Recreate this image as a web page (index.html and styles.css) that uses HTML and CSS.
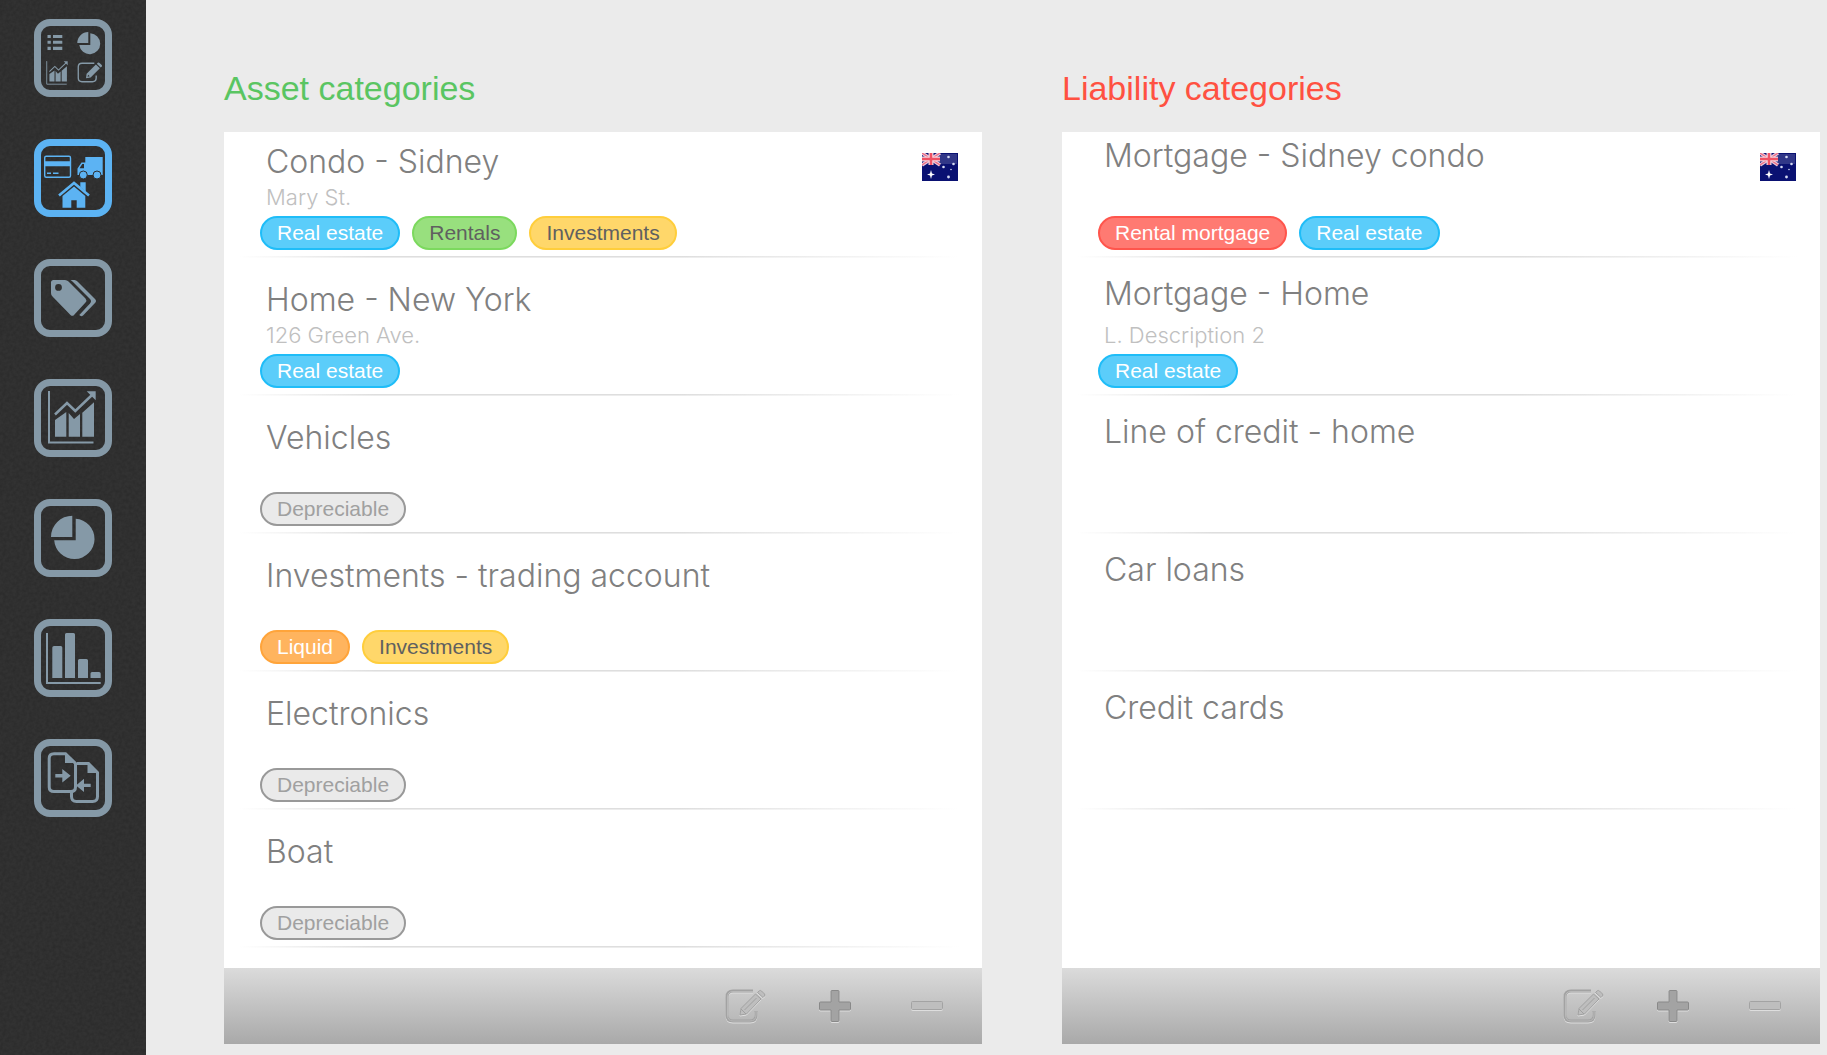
FILE: index.html
```html
<!DOCTYPE html>
<html lang="en">
<head>
<meta charset="utf-8">
<title>Categories</title>
<link rel="stylesheet" href="styles.css">
</head>
<body>
<svg class="defs" width="0" height="0" aria-hidden="true">
  <symbol id="trend" viewBox="0 0 78 78">
    <path d="M15 12V63.500H59.500" fill="none" stroke="currentColor" stroke-width="2"/>
    <path d="M21 41L32.300 33V57.700H21ZM34.700 34L40 40L46 35V57.700H34.700ZM48.300 33.700L60 23.300V57.700H48.300Z" fill="currentColor"/>
    <path d="M21 35.500L33 24L41.300 32L58 16" fill="none" stroke="currentColor" stroke-width="2.500"/>
    <path d="M52.700 12.300H61.700V21.300Z" fill="currentColor"/>
  </symbol>
  <symbol id="edit" viewBox="0 0 42 34">
    <path d="M28 2H8Q2 2 2 8V26Q2 32 8 32H25Q31 32 31 26V22" fill="none" stroke="currentColor" stroke-width="2.200"/>
    <path d="M14.500 26.500L15.500 19L30.500 4L37 10L22 25ZM32 2.800L34 1Q35.500 0.500 37 2L40 5Q41 6 40 7.500L38.300 9Z" fill="currentColor"/>
    <path d="M17 24L18 20.500L20.500 23Z" class="nib"/>
  </symbol>
  <symbol id="edit-raised" viewBox="0 0 42 34">
    <path d="M28 2H8Q2 2 2 8V26Q2 32 8 32H25Q31 32 31 26V22" fill="none" stroke="#a2a2a2" stroke-width="3"/>
    <path d="M28 2.500H8Q2.500 2.500 2.500 8V26Q2.500 32 8 32H25Q31 32 31 26V22" fill="none" stroke="#b9b9b9" stroke-width="1"/>
    <path d="M15 26L16 19.500L30.500 5L36 10L21.500 25ZM16 20L21 25M19.500 21L31.500 9M32.500 3.500L34.500 1.700Q35.500 1 36.500 2L39.500 5Q40.300 6 39.500 7L38 8.500Z" fill="#bebebe" stroke="#a0a0a0" stroke-width="1"/>
  </symbol>
  <symbol id="plus" viewBox="0 0 34 34">
    <path d="M14 1.500H20Q21 1.500 21 2.500V13H31.500Q32.500 13 32.500 14V20Q32.500 21 31.500 21H21V31.500Q21 32.500 20 32.500H14Q13 32.500 13 31.500V21H2.500Q1.500 21 1.500 20V14Q1.500 13 2.500 13H13V2.500Q13 1.500 14 1.500Z" fill="#a3a3a3" stroke="#898989"/>
  </symbol>
  <symbol id="minus" viewBox="0 0 34 34">
    <rect x="1.500" y="12.500" width="31" height="8" rx="1" fill="#bebebe" stroke="#a3a3a3"/>
  </symbol>
  <symbol id="flag-au" viewBox="0 0 36 28">
    <rect width="36" height="28" fill="#0a1172"/>
    <rect x="18" y="1" width="17" height="10" fill="#ffffff" opacity=".16"/>
    <path d="M0 0L18 12M18 0L0 12" stroke="#e9c9dc" stroke-width="3.500"/>
    <path d="M0 0L18 12M18 0L0 12" stroke="#ef6a80" stroke-width="1.200"/>
    <path d="M9 0V12M0 6H18" stroke="#f4d5df" stroke-width="5"/>
    <path d="M9 0V12M0 6H18" stroke="#f05264" stroke-width="2.500"/>
    <path d="M9 17L10 20.500L13 21.500L10 22.500L9 26L8 22.500L5 21.500L8 20.500Z" fill="#fff"/>
    <g fill="#d5daf2"><circle cx="26.500" cy="4" r="1.300"/><circle cx="21.500" cy="14" r="1.300"/><circle cx="31.500" cy="11" r="1.300"/><circle cx="26.500" cy="24" r="1.400"/><circle cx="29" cy="16.500" r=".8"/></g>
  </symbol>
</svg>

<div class="app">
  <nav class="sidebar" aria-label="Sections">
    <a class="nav-item" href="#overview" aria-label="Overview">
      <svg viewBox="0 0 78 78" fill="currentColor">
        <rect class="frame" x="3.500" y="3.500" width="71" height="71" rx="12.500"/>
        <path d="M13.500 16h3.300v3h-3.300zM13.500 21.700h3.300v3h-3.300zM13.500 27.700h3.300v3.300h-3.300zM19 16h9.300v3H19zM19 21.700h9.300v3H19zM19 27.700h9.300v3.300H19z"/>
        <path d="M54.300 13V24H43.300A11 11 0 0 1 54.300 13ZM56.300 14.200A10.500 10.500 0 1 1 45.300 26H56.300Z"/>
        <use href="#trend" x="6" y="36.700" width="35" height="35"/>
        <use href="#edit" x="43" y="43" width="26" height="21"/>
      </svg>
    </a>
    <a class="nav-item active" href="#categories" aria-label="Categories" aria-current="page">
      <svg viewBox="0 0 78 78" fill="currentColor">
        <rect class="frame" x="3.500" y="3.500" width="71" height="71" rx="12.500"/>
        <rect x="10.700" y="17.300" width="25.800" height="21" rx="1.500" fill="none" stroke="currentColor" stroke-width="1.400"/>
        <path d="M10.500 22.300h26v5h-26zM13 33.500h4v1.500h-4zM19 33.500h5.500v1.500H19z"/>
        <path d="M51.300 18H68.700V36H43.500V29.500L47.500 23.500H51.300ZM50 25H48.300L45.500 29.300H50Z" fill-rule="evenodd"/>
        <circle class="wheel" cx="49.300" cy="36" r="4"/><circle class="wheel" cx="63" cy="36" r="4"/>
        <path d="M25 56.500L40 44L55 56.500" fill="none" stroke="currentColor" stroke-width="2.600"/>
        <path d="M46.300 43.300H51.700V52.500L46.300 48ZM40 47.500L51.300 57V68.700H42.700V61.300H37.300V68.700H28.500V57Z"/>
      </svg>
    </a>
    <a class="nav-item" href="#tags" aria-label="Tags">
      <svg viewBox="0 0 78 78" fill="currentColor">
        <rect class="frame" x="3.500" y="3.500" width="71" height="71" rx="12.500"/>
        <path fill-rule="evenodd" d="M19.500 21H31Q33 21 34.500 22.500L51.500 39.500Q53.200 41.500 51.500 43.500L40 56Q38.500 57.700 36.500 56L18.500 37.500Q17 36 17 34V23.500Q17 21 19.500 21ZM24.500 25A3.400 3.400 0 1 0 24.500 31.800A3.400 3.400 0 1 0 24.500 25Z"/>
        <path d="M36.500 21H40.500Q42 21 43.500 22.500L61 40Q63 42 61 44L49 56.500Q47 58 45.300 56L56 44.500Q58 42 56 40L39 23Q38 21.800 36.500 21Z"/>
      </svg>
    </a>
    <a class="nav-item" href="#trends" aria-label="Trends">
      <svg viewBox="0 0 78 78" fill="currentColor">
        <rect class="frame" x="3.500" y="3.500" width="71" height="71" rx="12.500"/>
        <use href="#trend" width="78" height="78"/>
      </svg>
    </a>
    <a class="nav-item" href="#allocation" aria-label="Allocation">
      <svg viewBox="0 0 78 78" fill="currentColor">
        <rect class="frame" x="3.500" y="3.500" width="71" height="71" rx="12.500"/>
        <path d="M38.300 16.700V38H17A21.300 21.300 0 0 1 38.300 16.700ZM41.700 19.700A20.200 20.200 0 1 1 20.200 41.300H41.700Z"/>
      </svg>
    </a>
    <a class="nav-item" href="#comparison" aria-label="Comparison">
      <svg viewBox="0 0 78 78" fill="currentColor">
        <rect class="frame" x="3.500" y="3.500" width="71" height="71" rx="12.500"/>
        <path d="M13 14V64H66.700" fill="none" stroke="currentColor" stroke-width="2"/>
        <path d="M18.300 59V28.500Q18.300 27 20 27H26.800Q28.300 27 28.300 28.500V59ZM31 59V15.500Q31 14 32.500 14H39.500Q41 14 41 15.500V59ZM44 59V41.500Q44 40 45.500 40H52.500Q54 40 54 41.500V59ZM56.500 59V54.500Q56.500 53 58 53H65Q66.700 53 66.700 54.500V59Z"/>
      </svg>
    </a>
    <a class="nav-item" href="#transfer" aria-label="Import and export">
      <svg viewBox="0 0 78 78" fill="currentColor">
        <rect class="frame" x="3.500" y="3.500" width="71" height="71" rx="12.500"/>
        <path d="M43 24.500H54.500L63.500 33.500V57.500Q63.500 62.500 58.500 62.500H42.500Q37.500 62.500 37.500 57.500V53" fill="none" stroke="currentColor" stroke-width="3"/>
        <path d="M20 14.800H31.500L41.500 24.500V48Q41.500 52.500 37 52.500H20Q15.200 52.500 15.200 48V19.500Q15.200 14.800 20 14.800Z" fill="none" stroke="currentColor" stroke-width="3"/>
        <path d="M31 14V24H42ZM53.500 24V34H64.500ZM21.300 35H28.300V30L36.700 36.700L28.300 43.500V38.500H21.300ZM56.700 44.700H50V39.700L42 46.500L50 53V48H56.700Z"/>
      </svg>
    </a>
  </nav>

  <main class="content">
    <section class="column assets">
      <h1 class="heading">Asset categories</h1>
      <div class="panel">
        <ul class="list">
          <li class="row">
            <div class="info"><h2 class="title">Condo - Sidney</h2><p class="note">Mary St.</p>
              <div class="tags"><span class="tag blue">Real estate</span><span class="tag green">Rentals</span><span class="tag yellow">Investments</span></div></div>
            <svg class="flag" role="img" aria-label="Australia"><use href="#flag-au"/></svg>
          </li>
          <li class="row"><div class="info"><h2 class="title">Home - New York</h2><p class="note">126 Green Ave.</p>
            <div class="tags"><span class="tag blue">Real estate</span></div></div></li>
          <li class="row"><div class="info"><h2 class="title">Vehicles</h2>
            <div class="tags"><span class="tag grey">Depreciable</span></div></div></li>
          <li class="row"><div class="info"><h2 class="title">Investments - trading account</h2>
            <div class="tags"><span class="tag orange">Liquid</span><span class="tag yellow">Investments</span></div></div></li>
          <li class="row"><div class="info"><h2 class="title">Electronics</h2>
            <div class="tags"><span class="tag grey">Depreciable</span></div></div></li>
          <li class="row"><div class="info"><h2 class="title">Boat</h2>
            <div class="tags"><span class="tag grey">Depreciable</span></div></div></li>
        </ul>
        <div class="toolbar">
          <button class="tool wide" type="button" aria-label="Edit"><svg><use href="#edit-raised"/></svg></button>
          <button class="tool" type="button" aria-label="Add"><svg><use href="#plus"/></svg></button>
          <button class="tool" type="button" aria-label="Remove"><svg><use href="#minus"/></svg></button>
        </div>
      </div>
    </section>

    <section class="column liabilities">
      <h1 class="heading">Liability categories</h1>
      <div class="panel">
        <ul class="list">
          <li class="row">
            <div class="info"><h2 class="title">Mortgage - Sidney condo</h2>
              <div class="tags"><span class="tag red">Rental mortgage</span><span class="tag blue">Real estate</span></div></div>
            <svg class="flag" role="img" aria-label="Australia"><use href="#flag-au"/></svg>
          </li>
          <li class="row"><div class="info"><h2 class="title">Mortgage - Home</h2><p class="note">L. Description 2</p>
            <div class="tags"><span class="tag blue">Real estate</span></div></div></li>
          <li class="row"><div class="info"><h2 class="title">Line of credit - home</h2></div></li>
          <li class="row"><div class="info"><h2 class="title">Car loans</h2></div></li>
          <li class="row"><div class="info"><h2 class="title">Credit cards</h2></div></li>
        </ul>
        <div class="toolbar">
          <button class="tool wide" type="button" aria-label="Edit"><svg><use href="#edit-raised"/></svg></button>
          <button class="tool" type="button" aria-label="Add"><svg><use href="#plus"/></svg></button>
          <button class="tool" type="button" aria-label="Remove"><svg><use href="#minus"/></svg></button>
        </div>
      </div>
    </section>
  </main>
</div>
</body>
</html>
```
FILE: styles.css
```css
* { box-sizing: border-box; }

body {
  margin: 0;
  background: #ebebeb;
  font-family: "Liberation Sans", Arial, sans-serif;
}

h1, h2, p, ul { margin: 0; padding: 0; font-weight: 400; }
ul { list-style: none; }
.defs { position: absolute; }

.app { display: flex; min-height: 100vh; }

/* Sidebar */
.sidebar {
  flex: none;
  display: flex;
  flex-direction: column;
  align-items: center;
  gap: 42px;
  width: 146px;
  padding-top: 19px;
  background-color: #323232;
  background-image: url("data:image/svg+xml,%3Csvg xmlns='http://www.w3.org/2000/svg' width='160' height='160'%3E%3Cfilter id='n'%3E%3CfeTurbulence type='fractalNoise' baseFrequency='.3' numOctaves='2' stitchTiles='stitch'/%3E%3CfeColorMatrix values='0 0 0 0 0 0 0 0 0 0 0 0 0 0 0 .5 0 0 0 -.15'/%3E%3C/filter%3E%3Crect width='160' height='160' filter='url(%23n)' opacity='.5'/%3E%3C/svg%3E");
}
.nav-item { display: block; width: 78px; height: 78px; color: #8599a7; }
.nav-item svg { display: block; width: 100%; height: 100%; }
.nav-item.active { color: #5cb3f3; }
.frame { fill: none; stroke: currentColor; stroke-width: 7; }
.wheel { stroke: #2e2e2e; stroke-width: 1; }
.nib { fill: #2e2e2e; }

/* Columns */
.content {
  flex: 1;
  display: grid;
  grid-template-columns: 1fr 1fr;
  gap: 80px;
  padding: 68px 7px 11px 78px;
}
.column { display: flex; flex-direction: column; min-width: 0; }
.heading { height: 64px; font-size: 34px; line-height: 40px; }
.assets .heading { color: #5ac562; }
.liabilities .heading { color: #ff5141; }

.panel { flex: 1; display: flex; flex-direction: column; background: #fff; }
/* The list is scrolled a little, so the first row starts above the panel's edge. */
.list { flex: 1; overflow: hidden; padding-bottom: 20px; }
.row:first-child { margin-top: -12px; }
.row {
  display: flex;
  justify-content: space-between;
  height: 138px;
  padding: 22px 24px 8px 36px;
  background:
    linear-gradient(90deg, transparent 2%, #dedede 20%, #dedede 60%, transparent 97%) 0 136px / 100% 1px no-repeat,
    linear-gradient(90deg, transparent 2%, #ececec 20%, #ececec 60%, transparent 97%) 0 137px / 100% 1px no-repeat;
}
.liabilities .row { padding-top: 16px; }
.info { display: flex; flex-direction: column; justify-content: flex-end; }
.title {
  margin-bottom: auto;
  padding-left: 6px;
  font-family: Inter, "Liberation Sans", Arial, sans-serif;
  font-size: 32px;
  font-weight: 300;
  line-height: 40px;
  color: #808080;
}
.note {
  height: 32px;
  padding-left: 6px;
  font-family: Inter, "Liberation Sans", Arial, sans-serif;
  font-weight: 300;
  font-size: 22px;
  line-height: 26px;
  color: #c0c0c0;
}
.tags { display: flex; gap: 12px; }
.tag {
  height: 34px;
  padding: 0 15px;
  border: 2px solid;
  border-radius: 17px;
  font-size: 21px;
  line-height: 30px;
  color: #fff;
}
.tag.blue { background: #5bcdfa; border-color: #1fbdf8; }
.tag.green { background: #98e07e; border-color: #7cd95e; color: #606060; }
.tag.yellow { background: #ffd76a; border-color: #ffce3c; color: #606060; }
.tag.orange { background: #ffb45e; border-color: #ffa43a; }
.tag.red { background: #ff7a72; border-color: #ff554c; }
.tag.grey { background: #eaeaea; border-color: #999; color: #a0a0a0; }
.flag { flex: none; width: 36px; height: 28px; margin-top: 11px; }
.liabilities .flag { margin-top: 17px; }

/* Toolbar */
.toolbar {
  display: flex;
  align-items: center;
  justify-content: flex-end;
  gap: 50px;
  height: 76px;
  padding-right: 34px;
  background: linear-gradient(#dbdbdb, #a9a9a9);
}
.tool { width: 42px; height: 42px; padding: 0; border: 0; background: none; }
.tool svg {
  display: block;
  width: 34px;
  height: 34px;
  margin: 0 auto;
  filter: drop-shadow(0 1px 0 #dedede);
}
.tool.wide { margin-right: -3px; }
.tool.wide svg { width: 42px; }
```
